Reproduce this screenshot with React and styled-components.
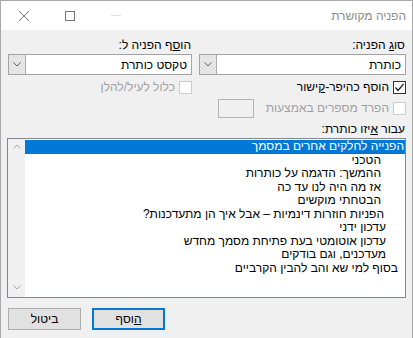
import React from 'react';
import styled, { createGlobalStyle } from 'styled-components';

const GlobalStyle = createGlobalStyle`
  html, body {
    margin: 0;
    padding: 0;
    background: #f0f0f0;
  }
  body {
    font-family: "Liberation Sans", Arial, sans-serif;
    font-size: 12px;
    color: #000;
  }
`;

const Window = styled.div`
  width: 413px;
  height: 338px;
  box-sizing: border-box;
  border: 1px solid #a9a9a9;
  border-bottom: none;
  background: #f0f0f0;
  display: flex;
  flex-direction: column;
  direction: rtl;
`;

const TitleBar = styled.div`
  height: 29px;
  background: #fff;
  display: flex;
  align-items: center;
`;

const Title = styled.div`
  flex: 1;
  padding-right: 6px;
  color: #8c8c8c;
  font-size: 12px;
`;

const Caption = styled.div`
  width: 46px;
  height: 29px;
  display: flex;
  align-items: center;
  justify-content: center;
`;

const Body = styled.div`
  flex: 1;
  padding: 8px 6px 0 6px;
  display: flex;
  flex-direction: column;
`;

const TopGrid = styled.div`
  display: grid;
  grid-template-columns: 207px 184px;
  column-gap: 7px;
`;

const Column = styled.div`
  display: flex;
  flex-direction: column;
`;

const Label = styled.div`
  height: 14px;
  line-height: 14px;
  padding-right: 1px;
  margin-bottom: ${p => p.$mb || 2}px;
  color: ${p => (p.$disabled ? '#a0a0a0' : '#000')};
`;

const Combo = styled.div`
  height: 21px;
  box-sizing: border-box;
  border: 1px solid #a3a3a3;
  background: #fff;
  display: flex;
  align-items: center;
`;

const ComboText = styled.div`
  flex: 1;
  padding-right: 4px;
`;

const ComboButton = styled.div`
  width: 17px;
  height: 19px;
  box-sizing: border-box;
  background: #e5e5e5;
  border-right: 1px solid #adadad;
  display: flex;
  align-items: center;
  justify-content: center;
`;

const CheckRow = styled.div`
  display: flex;
  align-items: center;
  height: ${p => p.$h || 13}px;
  margin-top: ${p => p.$mt || 0}px;
  gap: 4px;
`;

const Box = styled.div`
  width: 13px;
  height: 13px;
  box-sizing: border-box;
  border: 1px solid ${p => (p.$disabled ? '#cccccc' : '#333')};
  background: #fff;
  display: flex;
  align-items: center;
  justify-content: center;
  flex-shrink: 0;
`;

const CheckText = styled.span`
  color: ${p => (p.$disabled ? '#a0a0a0' : '#000')};
  line-height: 13px;
`;

const SmallInput = styled.div`
  width: 36px;
  height: 19px;
  box-sizing: border-box;
  border: 1px solid #b4b4b4;
  background: #f0f0f0;
  margin-right: 8px;
`;

const ListBox = styled.div`
  height: 160px;
  box-sizing: border-box;
  border: 1px solid #828790;
  background: #fff;
  display: flex;
`;

const Items = styled.div`
  flex: 1;
  padding-top: 1px;
`;

const Item = styled.div`
  height: 13.5px;
  line-height: 13px;
  padding-right: ${p => p.$indent}px;
  white-space: nowrap;
  background: ${p => (p.$selected ? '#0078d7' : 'transparent')};
  color: ${p => (p.$selected ? '#fff' : '#000')};
`;

const ScrollBar = styled.div`
  width: 17px;
  background: #f0f0f0;
  display: flex;
  flex-direction: column;
  justify-content: space-between;
  align-items: center;
  padding: 5px 0 7px;
  box-sizing: border-box;
`;

const ButtonRow = styled.div`
  display: flex;
  justify-content: flex-end;
  gap: 11px;
  margin-top: 10px;
  padding-left: 1px;
`;

const Button = styled.div`
  width: 73px;
  height: 22px;
  box-sizing: border-box;
  border: ${p => (p.$default ? '2px solid #0078d7' : '1px solid #adadad')};
  background: #e1e1e1;
  display: flex;
  align-items: center;
  justify-content: center;
`;

const Chevron = ({ up, color = '#606060' }) => (
  <svg width="8" height="5" viewBox="0 0 8 5">
    <path
      d={up ? 'M0.5 4.5 L4 1 L7.5 4.5' : 'M0.5 0.5 L4 4 L7.5 0.5'}
      fill="none"
      stroke={color}
      strokeWidth="1"
    />
  </svg>
);

const Check = () => (
  <svg width="11" height="11" viewBox="0 0 11 11">
    <path d="M1.5 5.5 L4 8.5 L9.5 2" fill="none" stroke="#222" strokeWidth="1.3" />
  </svg>
);

const items = [
  { text: 'הפנייה לחלקים אחרים במסמך', indent: 1, selected: true },
  { text: 'הטכני', indent: 24 },
  { text: 'ההמשך: הדגמה על כותרות', indent: 24 },
  { text: 'אז מה היה לנו עד כה', indent: 24 },
  { text: 'הבטחתי מוקשים', indent: 24 },
  { text: 'הפניות חוזרות דינמיות – אבל איך הן מתעדכנות?', indent: 21 },
  { text: 'עדכון ידני', indent: 19 },
  { text: 'עדכון אוטומטי בעת פתיחת מסמך מחדש', indent: 19 },
  { text: 'מעדכנים, וגם בודקים', indent: 19 },
  { text: 'בסוף למי שא והב להבין הקרביים', indent: 7 },
];

export default function App() {
  return (
    <>
      <GlobalStyle />
      <Window>
        <TitleBar>
          <Title>הפניה מקושרת</Title>
          <Caption>
            <svg width="10" height="1" viewBox="0 0 10 1">
              <rect width="10" height="1" fill="#e2e2e2" />
            </svg>
          </Caption>
          <Caption>
            <svg width="10" height="10" viewBox="0 0 10 10">
              <rect x="0.5" y="0.5" width="9" height="9" fill="none" stroke="#777" />
            </svg>
          </Caption>
          <Caption>
            <svg width="10" height="10" viewBox="0 0 10 10">
              <path d="M0 0 L10 10 M10 0 L0 10" stroke="#777" strokeWidth="1" />
            </svg>
          </Caption>
        </TitleBar>
        <Body>
          <TopGrid>
            <Column>
              <Label>
                סו<u>ג</u> הפניה:
              </Label>
              <Combo>
                <ComboText>כותרת</ComboText>
                <ComboButton>
                  <Chevron />
                </ComboButton>
              </Combo>
              <CheckRow $mt={6}>
                <Box>
                  <Check />
                </Box>
                <CheckText>
                  הוסף כהיפר-<u>ק</u>ישור
                </CheckText>
              </CheckRow>
              <CheckRow $mt={5} $h={19}>
                <Box $disabled />
                <CheckText $disabled>הפרד מספרים באמצעות</CheckText>
                <SmallInput />
              </CheckRow>
            </Column>
            <Column>
              <Label>
                הו<u>ס</u>ף הפניה ל:
              </Label>
              <Combo>
                <ComboText>טקסט כותרת</ComboText>
                <ComboButton>
                  <Chevron />
                </ComboButton>
              </Combo>
              <CheckRow $mt={6}>
                <Box $disabled />
                <CheckText $disabled>כלול לעיל/להלן</CheckText>
              </CheckRow>
            </Column>
          </TopGrid>
          <Label $mb={2} style={{ marginTop: 4 }}>
            עבור <u>א</u>יזו כותרת:
          </Label>
          <ListBox>
            <Items>
              {items.map((it, i) => (
                <Item key={i} $indent={it.indent} $selected={it.selected}>
                  {it.text}
                </Item>
              ))}
            </Items>
            <ScrollBar>
              <Chevron up color="#a6a6a6" />
              <Chevron color="#a6a6a6" />
            </ScrollBar>
          </ListBox>
          <ButtonRow>
            <Button $default>
              <span>
                <u>ה</u>וסף
              </span>
            </Button>
            <Button>ביטול</Button>
          </ButtonRow>
        </Body>
      </Window>
    </>
  );
}
